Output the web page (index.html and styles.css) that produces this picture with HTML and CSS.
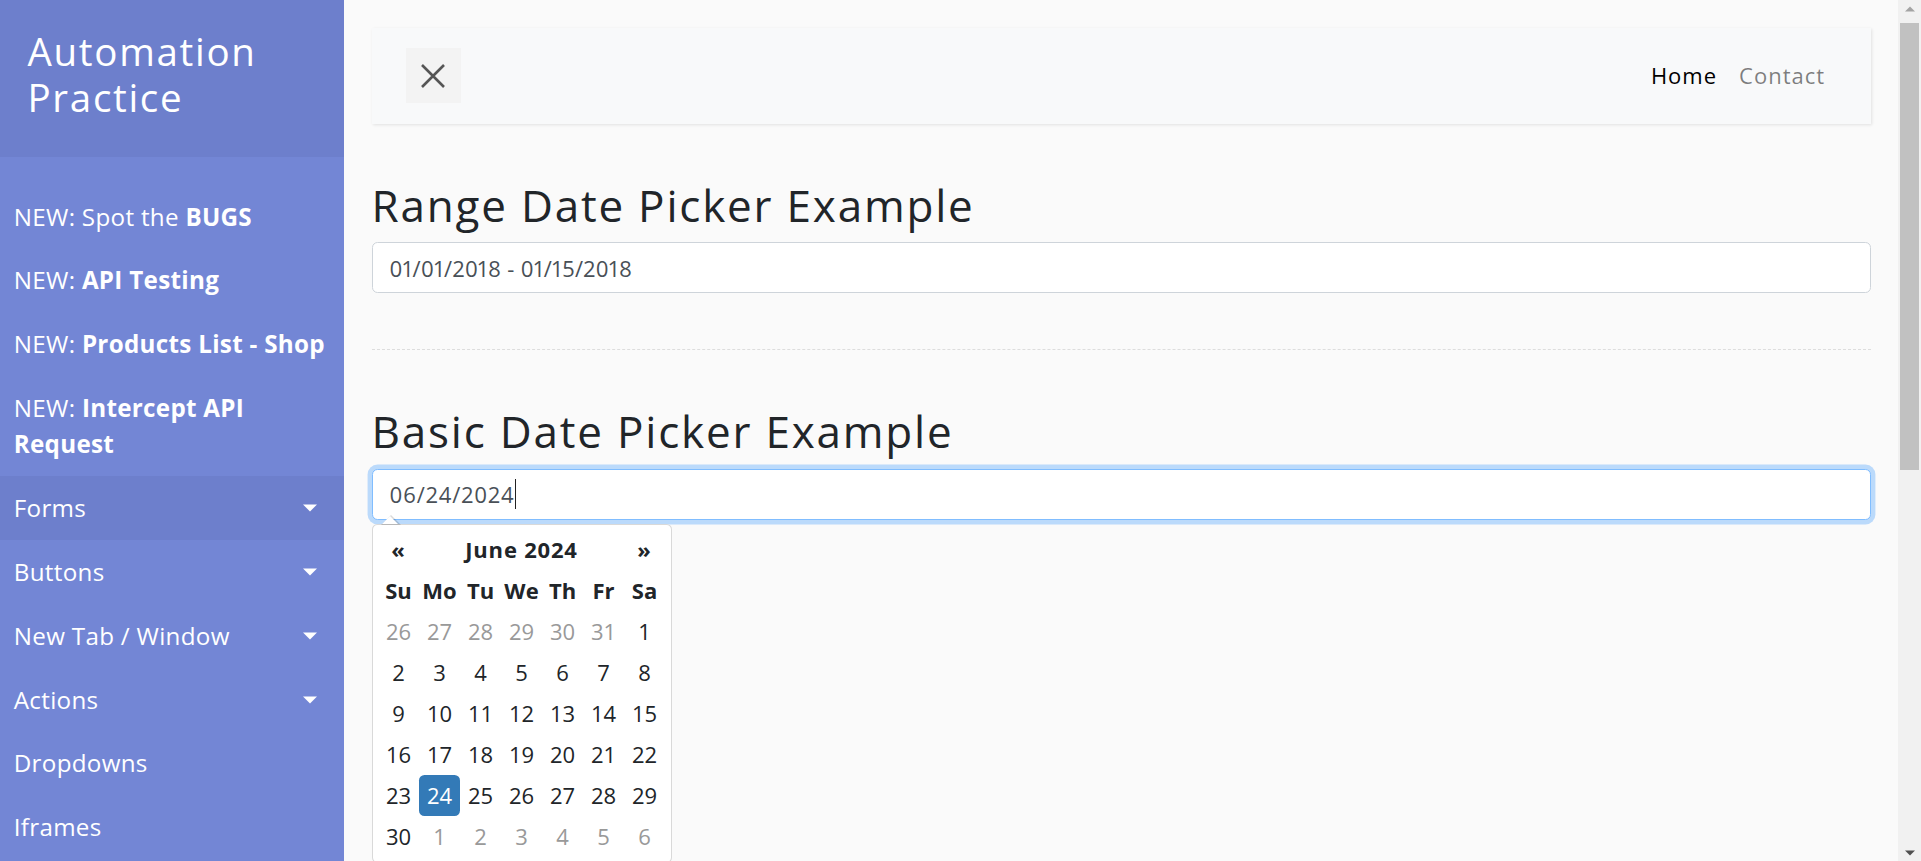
FILE: index.html
```html
<!DOCTYPE html>
<html lang="en">
<head>
<meta charset="utf-8">
<title>Automation Practice - Date Pickers</title>
<link rel="stylesheet" href="styles.css">
</head>
<body>
<div class="wrapper">
  <nav class="sidebar">
    <div class="sidebar-header"><h3>Automation Practice</h3></div>
    <ul class="components">
      <li><a href="#">NEW: Spot the <b>BUGS</b></a></li>
      <li><a href="#">NEW: <b>API Testing</b></a></li>
      <li><a href="#">NEW: <b>Products List - Shop</b></a></li>
      <li><a href="#">NEW: <b>Intercept API Request</b></a></li>
      <li class="active"><a href="#" class="dropdown-toggle">Forms</a></li>
      <li><a href="#" class="dropdown-toggle">Buttons</a></li>
      <li><a href="#" class="dropdown-toggle">New Tab / Window</a></li>
      <li><a href="#" class="dropdown-toggle">Actions</a></li>
      <li><a href="#">Dropdowns</a></li>
      <li><a href="#">Iframes</a></li>
    </ul>
  </nav>
  <main class="content">
    <nav class="navbar">
      <button class="toggle" type="button" aria-label="Toggle sidebar">
        <svg width="26" height="26" viewBox="0 0 26 26"><path d="M2 2L24 24M24 2L2 24" stroke="#555" stroke-width="2.6" fill="none"/></svg>
      </button>
      <ul class="nav">
        <li class="active"><a href="#">Home</a></li>
        <li><a href="#">Contact</a></li>
      </ul>
    </nav>
    <h2>Range Date Picker Example</h2>
    <div class="form-control range">01/01/2018 - 01/15/2018</div>
    <div class="line"></div>
    <h2>Basic Date Picker Example</h2>
    <div class="dp-wrap">
      <div class="form-control focus">06/24/2024<span class="caret"></span></div>
      <div class="datepicker">
        <table>
          <thead>
            <tr class="title"><th>«</th><th colspan="5">June 2024</th><th>»</th></tr>
            <tr class="dow"><th>Su</th><th>Mo</th><th>Tu</th><th>We</th><th>Th</th><th>Fr</th><th>Sa</th></tr>
          </thead>
          <tbody>
            <tr><td class="old">26</td><td class="old">27</td><td class="old">28</td><td class="old">29</td><td class="old">30</td><td class="old">31</td><td>1</td></tr>
            <tr><td>2</td><td>3</td><td>4</td><td>5</td><td>6</td><td>7</td><td>8</td></tr>
            <tr><td>9</td><td>10</td><td>11</td><td>12</td><td>13</td><td>14</td><td>15</td></tr>
            <tr><td>16</td><td>17</td><td>18</td><td>19</td><td>20</td><td>21</td><td>22</td></tr>
            <tr><td>23</td><td class="active">24</td><td>25</td><td>26</td><td>27</td><td>28</td><td>29</td></tr>
            <tr><td>30</td><td class="new">1</td><td class="new">2</td><td class="new">3</td><td class="new">4</td><td class="new">5</td><td class="new">6</td></tr>
          </tbody>
        </table>
      </div>
    </div>
  </main>
  <div class="scrollbar">
    <div class="sb-up"></div>
    <div class="sb-track"><div class="sb-thumb"></div></div>
    <div class="sb-down"></div>
  </div>
</div>
</body>
</html>
```
FILE: styles.css
```css
* { box-sizing: border-box; margin: 0; padding: 0; }
html, body { height: 100%; overflow: hidden; }
body {
  font-family: "Open Sans", "Liberation Sans", sans-serif;
  background: #fafafa;
  color: #212529;
  font-size: 22px;
}
a { text-decoration: none; color: inherit; }
.wrapper { display: flex; height: 100vh; }

/* Sidebar */
.sidebar { width: 344px; flex: none; background: #7386d5; color: #fff; }
.sidebar-header { background: #6d7fcc; padding: 27.5px 27.5px 37.5px; }
.sidebar-header h3 { font-size: 38.5px; font-weight: 500; line-height: 46.2px; letter-spacing: 1.7px; }
.components { list-style: none; padding: 27.5px 0; }
.components a {
  display: block;
  position: relative;
  padding: 13.75px;
  font-size: 24.2px;
  line-height: 36.3px;
  letter-spacing: 0.3px;
  color: #fff;
}
.components b { font-weight: 700; }
.components li.active > a { background: #6d7fcc; }
.dropdown-toggle::after {
  content: "";
  position: absolute;
  right: 27.5px;
  top: 50%;
  transform: translateY(-50%);
  border-top: 7.3px solid #fff;
  border-left: 7.3px solid transparent;
  border-right: 7.3px solid transparent;
}

/* Content */
.content { flex: 1; min-width: 0; padding: 27.5px; }
.navbar {
  display: flex;
  align-items: center;
  justify-content: space-between;
  background: #f8f9fa;
  padding: 20.5px 34.4px;
  box-shadow: 1px 1px 3px rgba(0, 0, 0, 0.1);
  margin-bottom: 55px;
}
.toggle {
  width: 55px;
  height: 55px;
  border: none;
  background: #f3f3f3;
  display: flex;
  align-items: center;
  justify-content: center;
}
.nav { display: flex; list-style: none; }
.nav a { display: block; padding: 0 11px; font-size: 22px; line-height: 33px; letter-spacing: 1px; color: rgba(0, 0, 0, 0.5); }
.nav .active a { color: #000; }

h2 { font-size: 44px; font-weight: 500; line-height: 52.8px; margin-bottom: 11px; letter-spacing: 1.8px; color: #212529; }

.form-control {
  height: 51px;
  background: #fff;
  border: 1.4px solid #ced4da;
  border-radius: 5.5px;
  padding: 0 17px;
  font-size: 22px;
  color: #495057;
  display: flex;
  align-items: center;
  font-variant-numeric: proportional-nums;
}
.form-control.range { letter-spacing: 0.35px; }
.form-control.focus {
  border-color: #80bdff;
  box-shadow: 0 0 0 4.4px rgba(0, 123, 255, 0.25);
  letter-spacing: 0.9px;
}
.caret { width: 1px; height: 30px; background: #222; margin-left: 0; }
.line { border-bottom: 1px dashed #ddd; margin: 55.5px 0 55px; }

/* Datepicker */
.dp-wrap { position: relative; }
.datepicker {
  position: absolute;
  left: 0;
  top: calc(100% + 4px);
  background: #fff;
  border: 1px solid rgba(0, 0, 0, 0.15);
  border-radius: 5.5px;
  padding: 4px 5.5px 5.5px;
}
.datepicker::before {
  content: "";
  position: absolute;
  top: -10px;
  left: 8px;
  border-left: 10px solid transparent;
  border-right: 10px solid transparent;
  border-bottom: 10px solid rgba(0, 0, 0, 0.15);
}
.datepicker::after {
  content: "";
  position: absolute;
  top: -8.6px;
  left: 9.4px;
  border-left: 8.6px solid transparent;
  border-right: 8.6px solid transparent;
  border-bottom: 8.6px solid #fff;
}
.datepicker table { border-collapse: separate; border-spacing: 0; }
.datepicker th, .datepicker td {
  width: 41px;
  height: 41px;
  padding: 0;
  text-align: center;
  font-size: 22px;
  color: #212529;
}
.datepicker th { font-weight: 700; }
.datepicker .title th { letter-spacing: 0.8px; }
.datepicker td.old, .datepicker td.new { color: #999; }
.datepicker td.active { background: #337ab7; color: #fff; border-radius: 5.5px; }

/* Scrollbar */
.scrollbar { width: 23px; flex: none; background: #f1f1f1; display: flex; flex-direction: column; align-items: center; }
.sb-up, .sb-down { height: 17px; width: 100%; position: relative; flex: none; }
.sb-up::after, .sb-down::after {
  content: "";
  position: absolute;
  left: 50%;
  top: 50%;
  transform: translate(-50%, -50%);
  border-left: 5px solid transparent;
  border-right: 5px solid transparent;
}
.sb-up::after { border-bottom: 5px solid #a3a3a3; }
.sb-down::after { border-top: 5px solid #505050; }
.sb-track { flex: 1; width: 100%; padding: 6px 2px 0; }
.sb-thumb { height: 447px; background: #c1c1c1; }
```
